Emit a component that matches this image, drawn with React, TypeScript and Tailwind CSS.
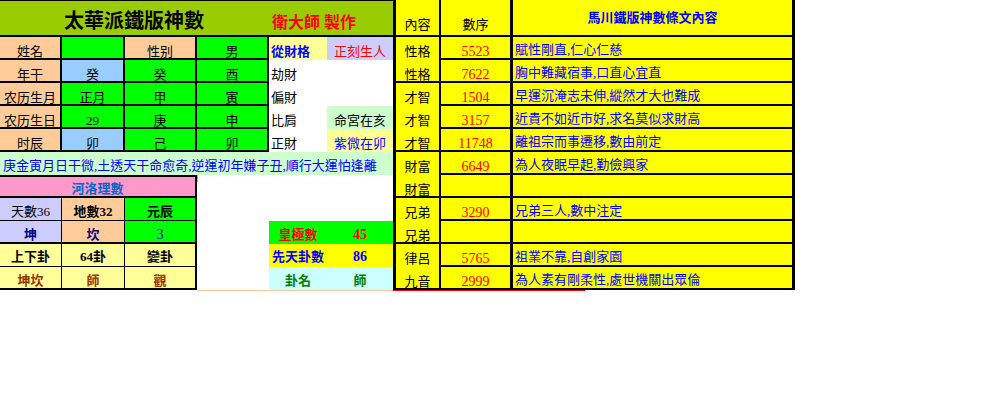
import React from 'react'

// Excel-style sheet: left = 命盤 summary, right = 條文 lookup table

const BASIC = [
  { cells: ['姓名', '', '性别', '男'], bgs: ['bg-[#ffcc99]', 'bg-[#00ff00]', 'bg-[#ffcc99]', 'bg-[#00ff00]'] },
  { cells: ['年干', '癸', '癸', '酉'], bgs: ['bg-[#ffcc99]', 'bg-[#99ccff]', 'bg-[#00ff00]', 'bg-[#00ff00]'] },
  { cells: ['农历生月', '正月', '甲', '寅'], bgs: ['bg-[#ffcc99]', 'bg-[#00ff00]', 'bg-[#00ff00]', 'bg-[#00ff00]'] },
  { cells: ['农历生日', '29', '庚', '申'], bgs: ['bg-[#ffcc99]', 'bg-[#00ff00]', 'bg-[#00ff00]', 'bg-[#00ff00]'] },
  { cells: ['时辰', '卯', '己', '卯'], bgs: ['bg-[#ffcc99]', 'bg-[#99ccff]', 'bg-[#00ff00]', 'bg-[#00ff00]'] },
]

const VERSES = [
  { label: '性格', num: '5523', text: '賦性剛直,仁心仁慈', end: false },
  { label: '性格', num: '7622', text: '胸中難藏宿事,口直心宜直', end: true },
  { label: '才智', num: '1504', text: '早運沉淹志未伸,縱然才大也難成', end: false },
  { label: '才智', num: '3157', text: '近貴不如近市好,求名莫似求財高', end: false },
  { label: '才智', num: '11748', text: '離祖宗而事遷移,數由前定', end: true },
  { label: '財富', num: '6649', text: '為人夜眠早起,勤儉興家', end: false },
  { label: '財富', num: '', text: '', end: true },
  { label: '兄弟', num: '3290', text: '兄弟三人,數中注定', end: false },
  { label: '兄弟', num: '', text: '', end: true },
  { label: '律呂', num: '5765', text: '祖業不靠,自創家園', end: false },
  { label: '九音', num: '2999', text: '為人素有剛柔性,處世機關出眾倫', end: true },
]

function Cell({ className, children }: { className: string; children?: React.ReactNode }) {
  return <div className={`flex items-center text-[13px] leading-[13px] whitespace-nowrap ${className}`}>{children}</div>
}

function LeftPanel() {
  return (
    <div className="grid w-[393px] grid-cols-[62px_63px_72px_72px_58px_66px] grid-rows-[37px_repeat(11,23px)]">
      {/* Title */}
      <div className="col-span-6 flex items-end border-t border-b-2 border-black bg-[#99cc00] pb-[4px]">
        <span className="w-[268px] text-center text-[20px] leading-[20px] font-bold text-black">太華派鐵版神數</span>
        <span className="pl-[4px] text-[16px] leading-[16px] font-bold text-[#ff0000]">衛大師 製作</span>
      </div>

      {BASIC.map((row, r) => (
        <React.Fragment key={r}>
          {row.cells.map((c, i) => (
            <Cell key={i} className={`justify-center border-r-2 border-b-2 border-black pt-[7px] ${row.bgs[i]}`}>
              {c}
            </Cell>
          ))}
          {r === 0 && (
            <>
              <Cell className="bg-[#ffff99] pl-[2px] pt-[5px] font-bold text-[#0000ff]">從財格</Cell>
              <Cell className="justify-center bg-[#ccccff] pt-[5px] text-[#ff0000]">正刻生人</Cell>
            </>
          )}
          {r === 1 && <Cell className="col-span-2 bg-white pl-[2px] pt-[5px]">劫財</Cell>}
          {r === 2 && <Cell className="col-span-2 bg-white pl-[2px] pt-[5px]">偏財</Cell>}
          {r === 3 && (
            <>
              <Cell className="bg-white pl-[2px] pt-[5px]">比肩</Cell>
              <Cell className="justify-center bg-[#ccffcc] pt-[5px]">命宮在亥</Cell>
            </>
          )}
          {r === 4 && (
            <>
              <Cell className="bg-white pl-[2px] pt-[5px]">正財</Cell>
              <Cell className="justify-center bg-[#ffff99] pt-[5px] text-[#0000ff]">紫微在卯</Cell>
            </>
          )}
        </React.Fragment>
      ))}

      {/* 批語 */}
      <Cell className="col-span-6 bg-[#ccffcc] pl-[3px] pt-[3px] text-[#0000ff]">
        庚金寅月日干微,土透天干命愈奇,逆運初年嫌子丑,順行大運怕逢離
      </Cell>

      {/* 河洛理數 */}
      <Cell className="col-span-3 justify-center border-t-2 border-r-2 border-b-2 border-black bg-[#ff99cc] pt-[3px] font-bold text-[#0066cc]">
        河洛理數
      </Cell>
      <div className="col-span-3 flex bg-white">
        <div className="h-[7px] w-px bg-[#33ccff]" />
      </div>

      <Cell className="justify-center border-r border-b border-black bg-[#ccccff] pt-[5px]">天數36</Cell>
      <Cell className="justify-center border-r border-b border-black bg-[#ffcc99] pt-[5px] font-bold">地數32</Cell>
      <Cell className="justify-center border-r-2 border-b border-black bg-[#00ff00] pt-[5px] font-bold">元辰</Cell>
      <div className="col-span-3 bg-white" />

      <Cell className="justify-center border-r border-b-2 border-black bg-[#ccccff] pt-[5px] font-bold text-[#000080]">坤</Cell>
      <Cell className="justify-center border-r border-b-2 border-black bg-[#ffcc99] pt-[5px] font-bold text-[#000080]">坎</Cell>
      <Cell className="justify-center border-r-2 border-b-2 border-black bg-[#00ff00] pt-[5px] text-[14px] text-[#0000cc]">3</Cell>
      <div className="bg-white" />
      <Cell className="justify-center bg-[#00ff00] pt-[3px] font-bold text-[#ff0000]">皇極數</Cell>
      <Cell className="justify-center bg-[#00ff00] pt-[3px] text-[14px] font-bold text-[#ff0000]">45</Cell>

      <Cell className="justify-center border-r border-b border-black bg-[#ffff99] pt-[3px] font-bold">上下卦</Cell>
      <Cell className="justify-center border-r border-b border-black bg-[#ffff99] pt-[3px] font-bold">64卦</Cell>
      <Cell className="justify-center border-r-2 border-b border-black bg-[#ffff99] pt-[3px] font-bold">變卦</Cell>
      <div className="bg-white" />
      <Cell className="justify-center bg-[#ffff00] pt-[2px] font-bold text-[#0000ff]">先天卦數</Cell>
      <Cell className="justify-center bg-[#ffff00] pt-[2px] text-[14px] font-bold text-[#0000ff]">86</Cell>

      <Cell className="justify-center border-r border-b-2 border-black bg-[#ffff99] pt-[5px] font-bold text-[#993300]">坤坎</Cell>
      <Cell className="justify-center border-r border-b-2 border-black bg-[#ffff99] pt-[5px] font-bold text-[#993300]">師</Cell>
      <Cell className="justify-center border-r-2 border-b-2 border-black bg-[#ffff99] pt-[5px] font-bold text-[#993300]">觀</Cell>
      <div className="bg-white" />
      <Cell className="justify-center bg-[#ccffff] pt-[3px] font-bold text-[#008000]">卦名</Cell>
      <Cell className="justify-center bg-[#ccffff] pt-[3px] font-bold text-[#008000]">師</Cell>
    </div>
  )
}

function RightPanel() {
  return (
    <div className="grid w-[402px] grid-cols-[48px_72px_282px] grid-rows-[37px_repeat(11,23px)] bg-[#ffff00]">
      <Cell className="justify-center border-l-[3px] border-r-2 border-b-2 border-black pt-[13px]">內容</Cell>
      <Cell className="justify-center border-r-[3px] border-b-2 border-black pt-[13px]">數序</Cell>
      <Cell className="justify-center border-r-[3px] border-b-2 border-black font-bold text-[#0000ff]">
        馬川鐵版神數條文內容
      </Cell>

      {VERSES.map((v, i) => (
        <React.Fragment key={i}>
          <Cell
            className={
              v.end
                ? 'justify-center border-l-[3px] border-r-2 border-b-2 border-black pt-[7px]'
                : 'justify-center border-l-[3px] border-r-2 border-black pt-[5px]'
            }
          >
            {v.label}
          </Cell>
          <Cell className="justify-center border-r-[3px] border-b-2 border-black pt-[7px] text-[14px] text-[#ff0000]">{v.num}</Cell>
          <Cell className="border-r-[3px] border-b-2 border-black pl-[2px] pt-[3px] text-[#0000ff]">{v.text}</Cell>
        </React.Fragment>
      ))}
    </div>
  )
}

export default function App() {
  return (
    <div className="h-[397px] w-[997px] overflow-hidden bg-white font-[family-name:'Liberation_Serif','Noto_Sans_CJK_TC',sans-serif] text-black">
      <div className="flex">
        <LeftPanel />
        <RightPanel />
      </div>
      {/* selection residue under the sheet */}
      <div className="flex h-px">
        <div className="w-[197px]" />
        <div className="w-[196px] bg-[#ffcc99]" />
        <div className="w-[192px] bg-[#ff0000]" />
      </div>
    </div>
  )
}
